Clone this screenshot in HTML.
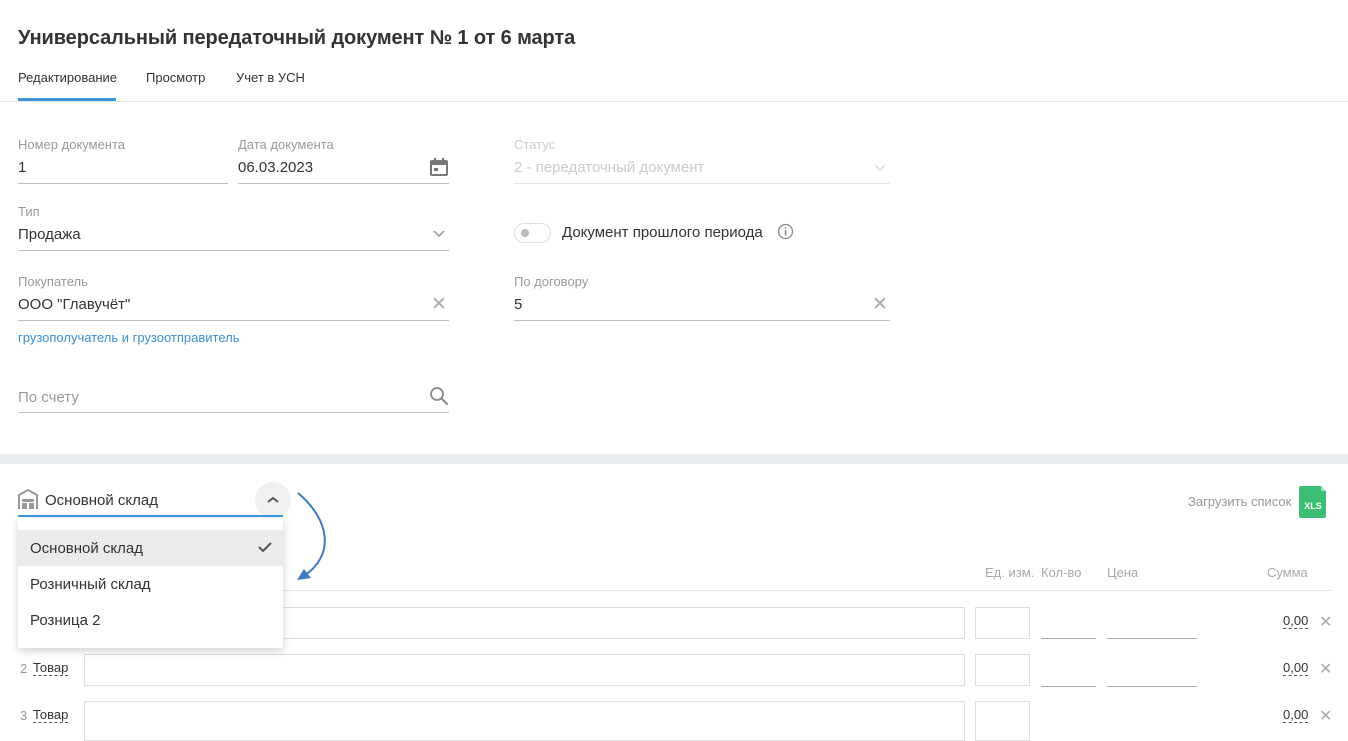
<!DOCTYPE html>
<html><head><meta charset="utf-8"><style>
*{box-sizing:border-box;margin:0;padding:0}
body{width:1348px;height:732px;overflow:hidden;background:#fff;font-family:"Liberation Sans",sans-serif;color:#333;position:relative}
.a{position:absolute;white-space:nowrap}
.lbl{font-size:13px;color:#999}
.val{font-size:15px;color:#333}
.ln{position:absolute;height:1px;background:#bdbdbd}
.box{position:absolute;border:1px solid #ddd;background:#fff}
.ul{position:absolute;height:1px;background:#aaa}
.num{font-size:13px;color:#999}
.tv{font-size:13px;color:#333;border-bottom:1px dashed #555;line-height:14px}
.sum{font-size:13px;color:#333;border-bottom:1px dashed #555;line-height:14px}
.x{font-size:16px;color:#aaa}
</style></head><body>
<div class="a" style="left:18px;top:27px;font-size:20px;font-weight:bold;color:#333;letter-spacing:-0.1px">Универсальный передаточный документ № 1 от 6 марта</div>
<div class="a" style="left:18px;top:70px;font-size:13px;color:#333">Редактирование</div>
<div class="a" style="left:146px;top:70px;font-size:13px;color:#333">Просмотр</div>
<div class="a" style="left:236px;top:70px;font-size:13px;color:#333">Учет в УСН</div>
<div class="a" style="left:0;top:101px;width:1348px;height:1px;background:#e3e3e3"></div>
<div class="a" style="left:18px;top:98px;width:98px;height:3px;background:#3a9ad9"></div>

<div class="a lbl" style="left:18px;top:137px">Номер документа</div>
<div class="a val" style="left:18px;top:159px">1</div>
<div class="ln" style="left:18px;top:183px;width:210px"></div>
<div class="a lbl" style="left:238px;top:137px">Дата документа</div>
<div class="a val" style="left:238px;top:159px">06.03.2023</div>
<svg class="a" style="left:429px;top:157px" width="20" height="20" viewBox="0 0 20 20"><rect x="2" y="4" width="16" height="14" rx="1" fill="none" stroke="#777" stroke-width="2"/><rect x="2" y="4" width="16" height="4" fill="#777"/><rect x="5" y="1" width="2" height="4" fill="#777"/><rect x="13" y="1" width="2" height="4" fill="#777"/><rect x="5" y="11" width="4" height="3" fill="#777"/></svg>
<div class="ln" style="left:238px;top:183px;width:211px"></div>
<div class="a lbl" style="left:514px;top:137px;color:#ccc">Статус</div>
<div class="a val" style="left:514px;top:159px;color:#ccc">2 - передаточный документ</div>
<svg class="a" style="left:874px;top:164px" width="12" height="8"><path d="M1 1l5 5 5-5" fill="none" stroke="#ddd" stroke-width="1.5"/></svg>
<div class="ln" style="left:514px;top:183px;width:376px;background:#e6e6e6"></div>

<div class="a lbl" style="left:18px;top:204px">Тип</div>
<div class="a val" style="left:18px;top:226px">Продажа</div>
<svg class="a" style="left:433px;top:230px" width="12" height="8"><path d="M1 1l5 5 5-5" fill="none" stroke="#999" stroke-width="1.5"/></svg>
<div class="ln" style="left:18px;top:250px;width:431px"></div>
<div class="a" style="left:514px;top:223px;width:37px;height:20px;border:1px solid #ddd;border-radius:10px"></div>
<div class="a" style="left:521px;top:229px;width:8px;height:8px;border-radius:50%;background:#bbb"></div>
<div class="a val" style="left:562px;top:224px">Документ прошлого периода</div>
<svg class="a" style="left:777px;top:223px" width="17" height="17"><circle cx="8.5" cy="8.5" r="7" fill="none" stroke="#888" stroke-width="1.3"/><rect x="7.8" y="7" width="1.5" height="5.5" fill="#888"/><rect x="7.8" y="4.3" width="1.5" height="1.5" fill="#888"/></svg>

<div class="a lbl" style="left:18px;top:274px">Покупатель</div>
<div class="a val" style="left:18px;top:296px">ООО "Главучёт"</div>
<div class="a x" style="left:431px;top:293px;font-size:19px">✕</div>
<div class="ln" style="left:18px;top:320px;width:431px"></div>
<div class="a" style="left:18px;top:330px;font-size:13px;color:#3a8fd0">грузополучатель и грузоотправитель</div>
<div class="a lbl" style="left:514px;top:274px">По договору</div>
<div class="a val" style="left:514px;top:296px">5</div>
<div class="a x" style="left:872px;top:293px;font-size:19px">✕</div>
<div class="ln" style="left:514px;top:320px;width:376px"></div>

<div class="a val" style="left:18px;top:389px;color:#999">По счету</div>
<svg class="a" style="left:429px;top:386px" width="20" height="20"><circle cx="8" cy="8" r="6" fill="none" stroke="#888" stroke-width="1.8"/><path d="M12.5 12.5l6 6" stroke="#888" stroke-width="2"/></svg>
<div class="ln" style="left:18px;top:412px;width:431px"></div>

<div class="a" style="left:0;top:454px;width:1348px;height:10px;background:#e9edf0"></div>

<svg class="a" style="left:18px;top:489px" width="20" height="21" viewBox="0 0 20 21"><path d="M1 20V6L10 1l9 5v14" fill="none" stroke="#999" stroke-width="2"/><rect x="4" y="10" width="12" height="3" fill="#999"/><rect x="4" y="14" width="5" height="6" fill="#999"/><rect x="11" y="14" width="5" height="6" fill="#999"/></svg>
<div class="a val" style="left:45px;top:492px">Основной склад</div>
<div class="a" style="left:255px;top:482px;width:36px;height:36px;border-radius:50%;background:#f0f0f0"></div>
<svg class="a" style="left:267px;top:496px" width="12" height="8"><path d="M1 6l5-4 5 4" fill="none" stroke="#555" stroke-width="2"/></svg>
<div class="a" style="left:18px;top:515px;width:265px;height:2px;background:#3a9ad9"></div>
<svg class="a" style="left:290px;top:490px" width="45" height="95"><path d="M8 3C40 30 45 65 14 86" fill="none" stroke="#3b7cc0" stroke-width="2"/><path d="M7 90l14-2-7-9z" fill="#3b7cc0"/></svg>

<div class="a" style="left:1188px;top:494px;font-size:13px;color:#999">Загрузить список</div>
<svg class="a" style="left:1299px;top:486px" width="28" height="32"><path d="M2 0h20l5 5v25a2 2 0 0 1-2 2H2a2 2 0 0 1-2-2V2a2 2 0 0 1 2-2z" fill="#3dbf73"/><path d="M22 0v5h5z" fill="#a8e0bd"/><text x="14" y="23" font-family="Liberation Sans" font-size="9" font-weight="bold" fill="#fff" text-anchor="middle">XLS</text></svg>

<div class="a" style="left:985px;top:565px;font-size:13px;color:#aaa">Ед. изм.</div>
<div class="a" style="left:1041px;top:565px;font-size:13px;color:#aaa">Кол-во</div>
<div class="a" style="left:1107px;top:565px;font-size:13px;color:#aaa">Цена</div>
<div class="a" style="left:1267px;top:565px;font-size:13px;color:#aaa">Сумма</div>
<div class="a" style="left:18px;top:590px;width:1314px;height:1px;background:#e3e3e3"></div>

<div class="box" style="left:84px;top:607px;width:881px;height:32px"></div>
<div class="box" style="left:975px;top:607px;width:55px;height:32px"></div>
<div class="ul" style="left:1041px;top:638px;width:55px"></div>
<div class="ul" style="left:1107px;top:638px;width:90px"></div>
<div class="a sum" style="left:1283px;top:614px">0,00</div>
<div class="a x" style="left:1319px;top:612px">✕</div>

<div class="a num" style="left:20px;top:661px">2</div>
<div class="a tv" style="left:33px;top:661px">Товар</div>
<div class="box" style="left:84px;top:654px;width:881px;height:32px"></div>
<div class="box" style="left:975px;top:654px;width:55px;height:32px"></div>
<div class="ul" style="left:1041px;top:686px;width:55px"></div>
<div class="ul" style="left:1107px;top:686px;width:90px"></div>
<div class="a sum" style="left:1283px;top:661px">0,00</div>
<div class="a x" style="left:1319px;top:659px">✕</div>

<div class="a num" style="left:20px;top:708px">3</div>
<div class="a tv" style="left:33px;top:708px">Товар</div>
<div class="box" style="left:84px;top:701px;width:881px;height:40px"></div>
<div class="box" style="left:975px;top:701px;width:55px;height:40px"></div>
<div class="a sum" style="left:1283px;top:708px">0,00</div>
<div class="a x" style="left:1319px;top:706px">✕</div>

<div class="a" style="left:18px;top:518px;width:265px;height:130px;background:#fff;box-shadow:0 3px 8px rgba(0,0,0,.18)"></div>
<div class="a" style="left:18px;top:530px;width:265px;height:36px;background:#ebebeb"></div>
<div class="a val" style="left:30px;top:540px">Основной склад</div>
<svg class="a" style="left:258px;top:542px" width="14" height="11"><path d="M1 5l4 4 8-8" fill="none" stroke="#555" stroke-width="2"/></svg>
<div class="a val" style="left:30px;top:576px">Розничный склад</div>
<div class="a val" style="left:30px;top:612px">Розница 2</div>
</body></html>
